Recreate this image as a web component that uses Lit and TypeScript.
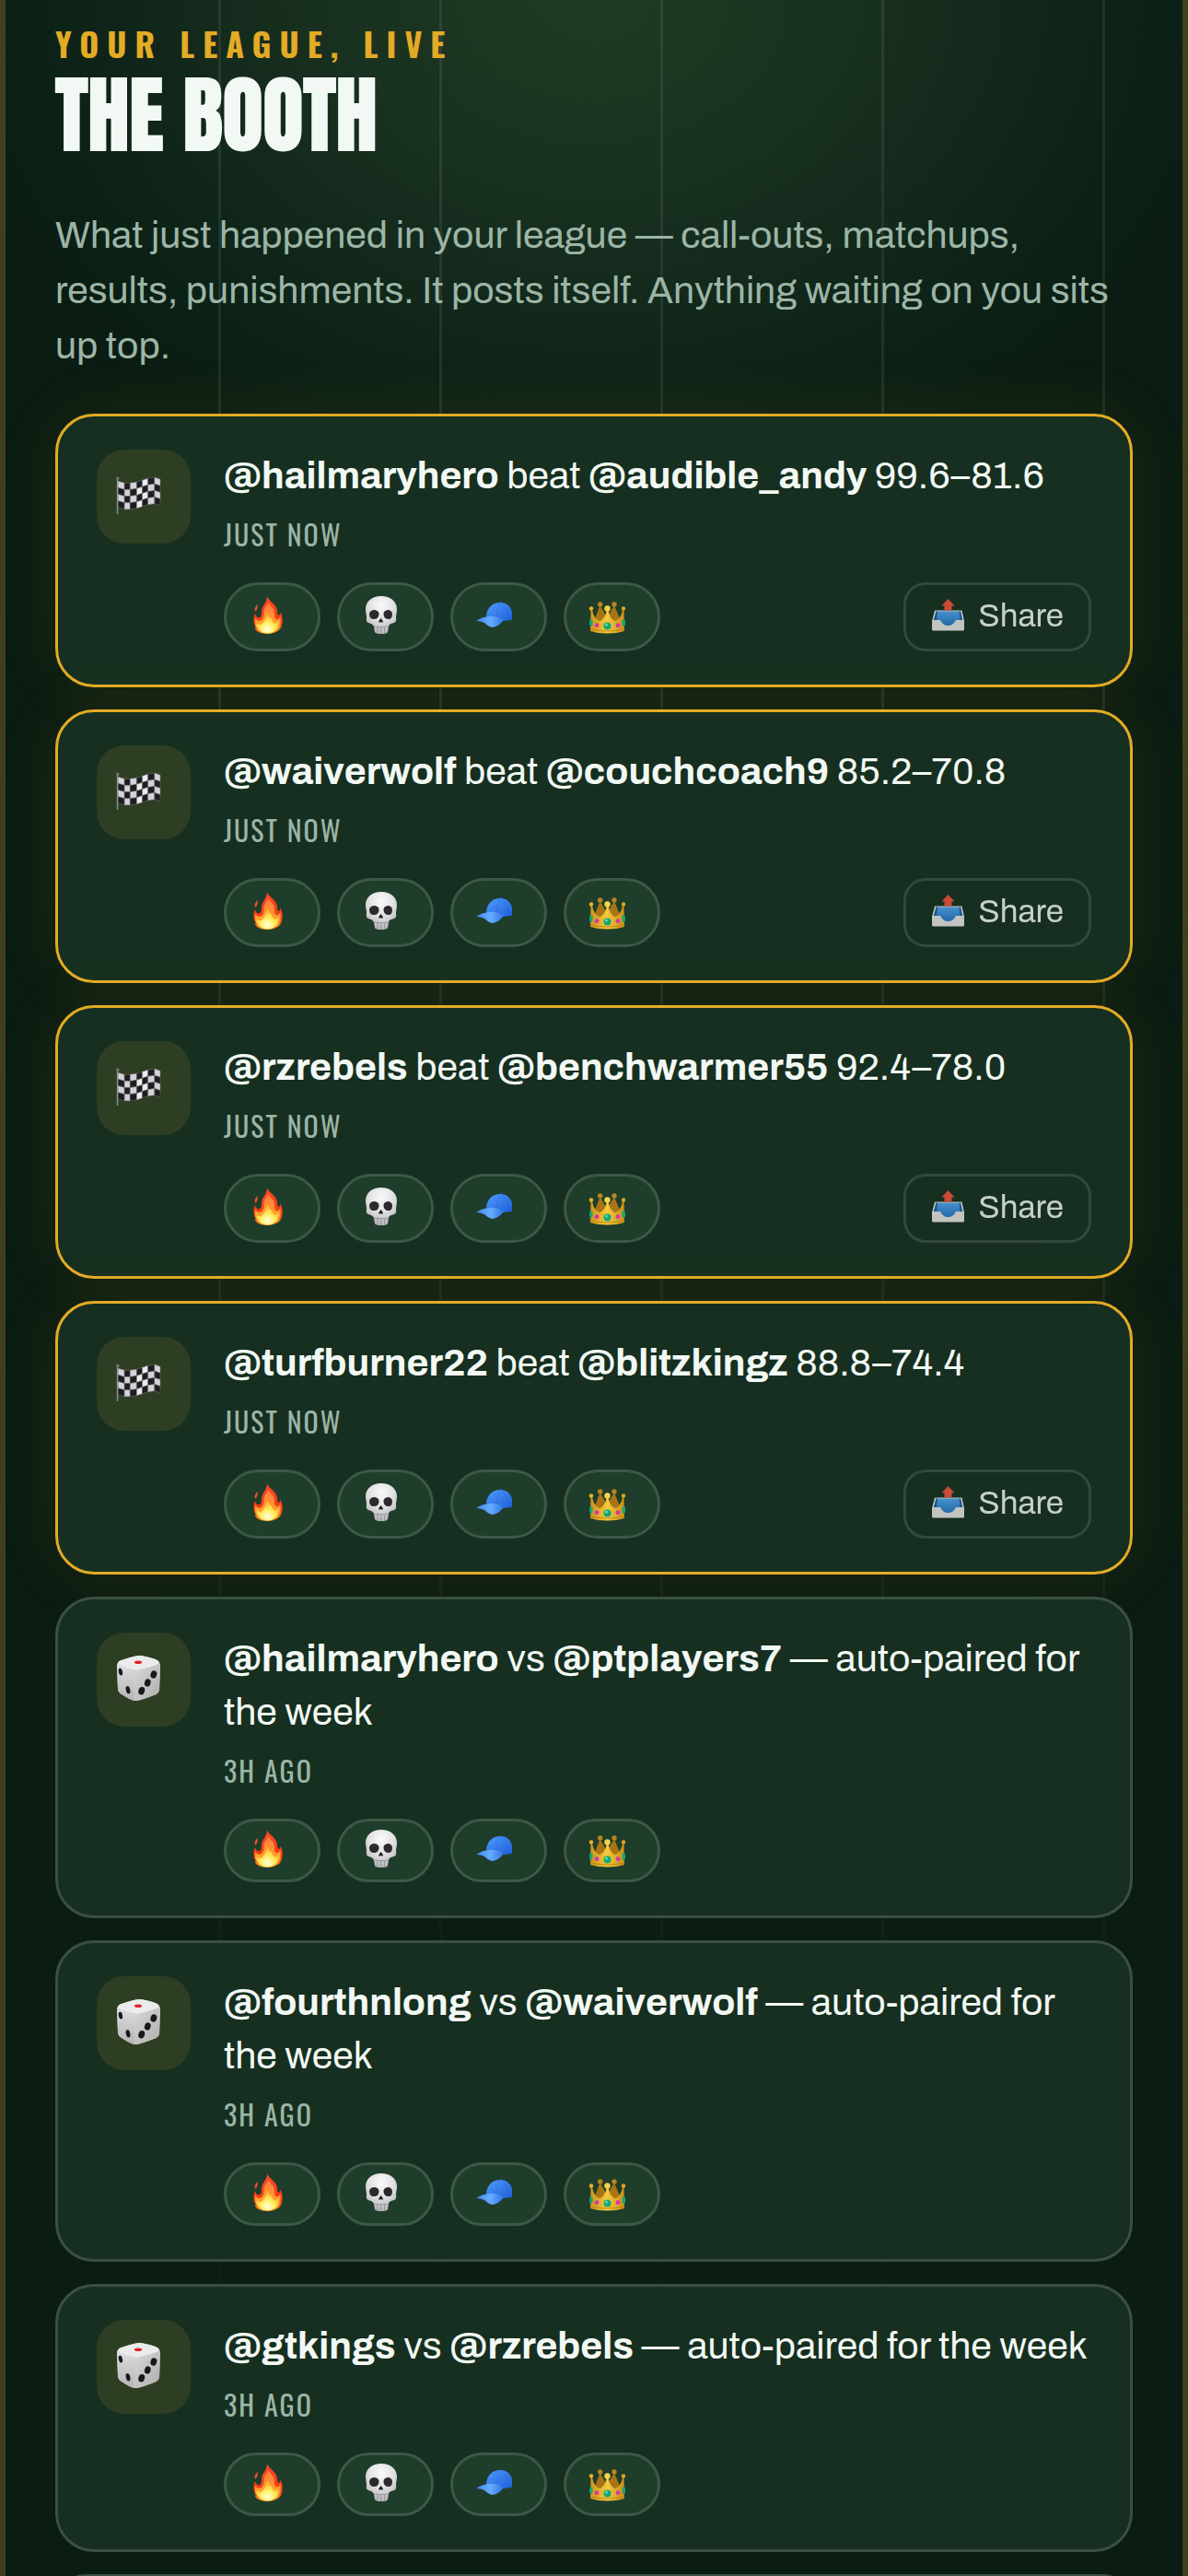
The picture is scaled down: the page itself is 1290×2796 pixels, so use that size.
import { LitElement, html, svg, css, nothing } from "lit";
import { customElement, property } from "lit/decorators.js";

type Part = string | { handle: string };
interface Post {
  kind: "result" | "pairing";
  text: Part[];
  time: string;
}

const at = (handle: string) => ({ handle: "@" + handle });
const result = (winner: string, loser: string, score: string): Post => ({
  kind: "result",
  text: [at(winner), " beat ", at(loser), " " + score],
  time: "Just now",
});
const pairing = (home: string, away: string): Post => ({
  kind: "pairing",
  text: [at(home), " vs ", at(away), " — auto-paired for the week"],
  time: "3h ago",
});

const POSTS: Post[] = [
  result("hailmaryhero", "audible_andy", "99.6–81.6"),
  result("waiverwolf", "couchcoach9", "85.2–70.8"),
  result("rzrebels", "benchwarmer55", "92.4–78.0"),
  result("turfburner22", "blitzkingz", "88.8–74.4"),
  pairing("hailmaryhero", "ptplayers7"),
  pairing("fourthnlong", "waiverwolf"),
  pairing("gtkings", "rzrebels"),
];

/* Checkered flag: seven columns by four rows, each column following the wave. */
const flagX = [2, 9, 15, 22, 28, 34, 41, 47];
const flagTop = [9, 11, 11, 10, 8, 6, 5, 7];
const flagCells = flagX.slice(0, -1).flatMap((x, c) =>
  [0, 1, 2, 3].map((r) => {
    const x2 = flagX[c + 1];
    const y = flagTop[c] + r * 7;
    const y2 = flagTop[c + 1] + r * 7;
    const light = c > 2 && c < 5 ? "#ececee" : "#d4d4d8";
    return svg`<path d=${`M${x} ${y}L${x2} ${y2}V${y2 + 7}L${x} ${y + 7}Z`}
      fill=${(c + r) % 2 ? "#1d1d1f" : light} stroke="#77777b" stroke-width=".5"/>`;
  })
);

const flagIcon = html`<svg class="tile-icon" viewBox="0 0 48 48" aria-hidden="true">
  ${flagCells}
  <path d="M1.500 6V44" stroke="#8d9499" stroke-width="1.400"/>
  <circle cx="1.800" cy="6" r="1.600" fill="#6f777c"/>
</svg>`;

const dieIcon = html`<svg class="tile-icon" viewBox="0 -1 50 50" aria-hidden="true">
  <defs>
    <linearGradient id="dl" x1="0" y1="0" x2="0" y2="1">
      <stop offset="0" stop-color="#dedede"/><stop offset="1" stop-color="#b4b4b4"/>
    </linearGradient>
    <linearGradient id="dr" x1="0" y1="0" x2="1" y2="1">
      <stop offset="0" stop-color="#d8d8d8"/><stop offset="1" stop-color="#aeaeae"/>
    </linearGradient>
  </defs>
  <path d="M6 4Q24 -2 28 -1Q44 2 47 5Q49 7 49 11L48 36Q48 40 44 42Q26 49 21 49Q17 49 5 41Q2 39 2 35L1 10Q1 6 6 4Z" fill="#d6d6d6"/>
  <path d="M1 8Q10 12 17 14Q21 16 21 21L20 49Q16 48 5 41Q2 39 2 35Z" fill="url(#dl)"/>
  <path d="M49 8Q40 11 27 14Q21 16 21 21L20 49Q26 49 44 42Q48 40 48 36Z" fill="url(#dr)"/>
  <path d="M2 8Q2 5 6 4Q22 -1 27 -1Q44 2 47 5Q49 7 45 9Q34 13 24 15Q19 15 5 10Z" fill="#ebebeb"/>
  <ellipse cx="24.500" cy="6.300" rx="4.200" ry="1.800" fill="#e3202a"/>
  <ellipse cx="5" cy="17" rx="2.100" ry="4" fill="#17181a" transform="rotate(-12 5 17)"/>
  <ellipse cx="13.300" cy="37" rx="2.300" ry="4.300" fill="#17181a" transform="rotate(-14 13.300 37)"/>
  <ellipse cx="41.700" cy="20" rx="3.400" ry="4.300" fill="#17181a" transform="rotate(18 41.700 20)"/>
  <ellipse cx="35" cy="29" rx="3.300" ry="4.300" fill="#17181a" transform="rotate(18 35 29)"/>
  <ellipse cx="28.300" cy="38" rx="3.400" ry="4.400" fill="#17181a" transform="rotate(18 28.300 38)"/>
</svg>`;

const fireIcon = html`<svg class="emoji" viewBox="0 0 42 42" aria-hidden="true">
  <defs>
    <linearGradient id="fo" x1="0" y1="0" x2="0" y2="1">
      <stop offset="0" stop-color="#f9482c"/><stop offset=".7" stop-color="#f63a12"/><stop offset="1" stop-color="#fb9a1c"/>
    </linearGradient>
    <linearGradient id="fm" x1="0" y1="0" x2="0" y2="1">
      <stop offset="0" stop-color="#fb7a3e"/><stop offset=".6" stop-color="#ff9c2e"/><stop offset="1" stop-color="#ffc02e"/>
    </linearGradient>
    <radialGradient id="fi" cx=".5" cy=".8" r=".7">
      <stop offset="0" stop-color="#fffde0"/><stop offset=".45" stop-color="#ffef62"/><stop offset="1" stop-color="#ffb62c"/>
    </radialGradient>
  </defs>
  <path d="M20 1C21 6 30 9 31 17Q31 21 32 22Q34 22 34.500 18.500C37 23 37.500 28 36 33Q35 36 33 38Q27 42 21 42Q12 42 8 38L6.500 35.500L8 35.500C5 31 4.500 25 7 20Q8 24 11 24.500Q14 24 14 18C14 11 20 9 20 1Z" fill="url(#fo)"/>
  <path d="M10 10Q7 12 6.500 15L7.500 18Q9 16 9.500 14Z" fill="#f4512f"/>
  <path d="M21 8Q24 12 27 15Q28 18 28 23Q29 27 32 26Q34 25 34.500 23Q36 32 31 38Q26 41 21 41Q14 41 10 37Q6 32 7 25Q9 28 12 28Q17 26 16.500 19Q17 13 20 11Z" fill="url(#fm)"/>
  <path d="M20 19Q22 24 25 26Q26 30 29 31Q31 30 32 28Q33 35 28 39Q24 41.500 20 41.500Q14 41 11 37Q8 34 9 30Q11 33 14 32Q19 27 20 19Z" fill="url(#fi)"/>
</svg>`;

const skullIcon = html`<svg class="emoji" viewBox="0 0 42 42" aria-hidden="true">
  <defs>
    <radialGradient id="sk" cx=".5" cy=".25" r=".75">
      <stop offset="0" stop-color="#fafafa"/><stop offset=".55" stop-color="#dfdfe1"/><stop offset="1" stop-color="#b4b4b9"/>
    </radialGradient>
  </defs>
  <path d="M21 1C31 1 38 7 38 15C38 19 37 21 37 24Q38 29 35 30Q29 31 29 34L28 40Q27 42 21 42Q15 42 14 40L13 34Q12 31 7 30Q4 29 5 24C5 21 4 19 4 15C4 7 11 1 21 1Z" fill="url(#sk)"/>
  <path d="M8 20Q9 16 14 16Q19 17 18.500 21Q18 26 13 26Q8 26 8 20Z" fill="#2a2a2d"/>
  <path d="M33 20Q32 16 28 16Q23 17 23.500 21Q24 26 29 26Q33 26 33 20Z" fill="#2a2a2d"/>
  <path d="M20.500 25Q22.500 27 23 29Q22 30 20.500 29Q19 30 18 29Q19 27 20.500 25Z" fill="#1b1b1d"/>
  <path d="M13.500 34Q21 35.500 28.500 34M17 35V41M20.800 35V42M24.600 35V41" fill="none" stroke="#8f8f94" stroke-width=".9"/>
</svg>`;

const capIcon = html`<svg class="emoji" viewBox="0 0 42 42" aria-hidden="true">
  <defs>
    <linearGradient id="cc" x1="0" y1="0" x2="1" y2="1">
      <stop offset="0" stop-color="#4e9cff"/><stop offset="1" stop-color="#1f5fd8"/>
    </linearGradient>
    <linearGradient id="cb" x1="0" y1="0" x2="1" y2="0">
      <stop offset="0" stop-color="#3d87f2"/><stop offset=".5" stop-color="#67adff"/><stop offset="1" stop-color="#2f74e4"/>
    </linearGradient>
  </defs>
  <path d="M12 24Q12 15 19 10Q23 8 27 8Q28 7 29 8Q36 9 39 15Q41 20 39.500 27L30 28Q20 22 12 24Z" fill="url(#cc)"/>
  <path d="M28 8Q23 13 23.500 23M28 8Q36 13 36 27" fill="none" stroke="#2561cc" stroke-width=".7" opacity=".5"/>
  <path d="M1.500 28Q4 25 12 23.500Q22 21 31 27Q26 34 18 35Q14 34 10 30Q6 28 1.500 28Z" fill="url(#cb)"/>
</svg>`;

const crownIcon = html`<svg class="emoji" viewBox="0 0 42 42" aria-hidden="true">
  <defs>
    <linearGradient id="cr" x1="0" y1="0" x2="1" y2="0">
      <stop offset="0" stop-color="#cc9419"/><stop offset=".5" stop-color="#f3ca3f"/><stop offset="1" stop-color="#c68d17"/>
    </linearGradient>
  </defs>
  <path d="M6 28L12.500 11L20 24L28 11L35 28Z" fill="#a87414"/>
  <circle cx="12.700" cy="10" r="2.700" fill="#b8841e"/><circle cx="28" cy="10" r="2.700" fill="#b8841e"/>
  <path d="M2 39L2.500 16L4 16Q6 26 12 28Q18 26 20 16L21.500 16Q23 26 29 28Q35 26 37 16L38.500 16L39 39Q31 41.500 20.500 41.500Q10 41.500 2 39Z" fill="url(#cr)"/>
  <path d="M2 37Q20 41 39 37" fill="none" stroke="#b17c12" stroke-width=".8"/>
  <circle cx="3" cy="14.500" r="2.200" fill="#e9b52e"/><circle cx="20.500" cy="14.500" r="3.200" fill="#f8d347"/><circle cx="38" cy="14.500" r="2.200" fill="#dba526"/>
  <circle cx="20.500" cy="33.500" r="4" fill="#17a673"/><circle cx="19.500" cy="32" r="1.500" fill="#5fdcae"/>
  <circle cx="9" cy="32.700" r="2.400" fill="#d637a8"/><circle cx="32" cy="32.700" r="2.400" fill="#d637a8"/>
  <ellipse cx="2.800" cy="30" rx="1.800" ry="4" fill="#17a673"/><ellipse cx="38.300" cy="30" rx="1.800" ry="4" fill="#17a673"/>
</svg>`;

const outboxIcon = html`<svg class="emoji" viewBox="0 0 42 42" aria-hidden="true">
  <defs>
    <linearGradient id="ob" x1="0" y1="0" x2="0" y2="1">
      <stop offset="0" stop-color="#55a9f5"/><stop offset="1" stop-color="#2479cf"/>
    </linearGradient>
  </defs>
  <path d="M4 15.500H33.500L36 27V36Q36 37.500 34.500 37.500H2.500Q1 37.500 1 36V27Z" fill="#eceae8"/>
  <path d="M5.500 16.500H32L34 26H27Q24 32 18.500 32Q13 32 10 26H3Z" fill="url(#ob)"/>
  <path d="M5.500 16.500H7L6 26H3ZM32 16.500H30.500L31.500 26H34Z" fill="#1c5fa8"/>
  <path d="M18.500 3L25.500 10.500H22.500V15.500H14.500V10.500H11.500Z" fill="#f8523f"/>
</svg>`;

const REACTIONS = [
  { name: "Fire", icon: fireIcon },
  { name: "Skull", icon: skullIcon },
  { name: "Cap", icon: capIcon },
  { name: "Crown", icon: crownIcon },
];

@customElement("booth-post")
export class BoothPost extends LitElement {
  @property({ attribute: false }) post!: Post;

  static styles = css`
    :host {
      display: block;
    }
    .card {
      display: flex;
      align-items: flex-start;
      gap: 36px;
      padding: 36px 42px;
      border: 3px solid #3a5042;
      border-radius: 42px;
      background: #162f20;
    }
    .result {
      border-color: #e3ab26;
      box-shadow: 0 0 72px rgba(227, 171, 38, 0.09);
    }
    .tile {
      flex: none;
      display: flex;
      align-items: center;
      box-sizing: border-box;
      width: 102px;
      height: 102px;
      padding: 0 0 3px 21px;
      border-radius: 30px;
      background: #2d3e22;
    }
    .tile-icon {
      width: 49px;
      height: 49px;
    }
    .body {
      flex: 1;
      min-width: 0;
    }
    .text {
      margin: 0;
      font-size: 41px;
      line-height: 58px;
      color: #f2f8f3;
    }
    .handle {
      font-weight: 700;
    }
    .time {
      display: block;
      margin-top: 11px;
      font: 400 30px/46px Oswald, "Roboto Condensed", sans-serif;
      letter-spacing: 2px;
      text-transform: uppercase;
      color: #9cb5a6;
    }
    .actions {
      display: flex;
      gap: 18px;
      margin-top: 29px;
    }
    button {
      display: flex;
      align-items: center;
      margin: 0;
      border: 3px solid #3e5848;
      font: inherit;
      cursor: pointer;
    }
    .chip {
      min-height: 69px;
      padding: 0 33px 6px 24px;
      border-radius: 999px;
      background: #1e3d2a;
    }
    .share {
      min-height: 75px;
      gap: 9px;
      margin-left: auto;
      padding: 0 27px 3px;
      border-radius: 24px;
      border-color: #3a5042;
      background: none;
      color: #f2f8f3;
      font-size: 35px;
      line-height: 48px;
      opacity: 0.8;
    }
    .emoji {
      display: block;
      width: 42px;
      height: 42px;
    }
  `;

  render() {
    const { kind, text, time } = this.post;
    return html`<article class="card ${kind}">
      <div class="tile">${kind === "result" ? flagIcon : dieIcon}</div>
      <div class="body">
        <p class="text">${text.map((p) => (typeof p === "string" ? p : html`<b class="handle">${p.handle}</b>`))}</p>
        <time class="time">${time}</time>
        <div class="actions">
          ${REACTIONS.map((r) => html`<button class="chip" type="button" aria-label=${r.name}>${r.icon}</button>`)}
          ${kind === "result" ? html`<button class="share" type="button">${outboxIcon}<span>Share</span></button>` : nothing}
        </div>
      </div>
    </article>`;
  }
}

@customElement("app-root")
export class AppRoot extends LitElement {
  static styles = css`
    :host {
      display: block;
      height: 100vh;
      overflow: hidden;
      font-family: Archivo, "Liberation Sans", sans-serif;
    }
    .page {
      position: relative;
      box-sizing: border-box;
      min-height: 100vh;
      padding: 20px 60px 24px;
      background:
        radial-gradient(ellipse 480px 300px at 50% 0, rgba(120, 140, 20, 0.04), transparent),
        radial-gradient(ellipse 56% 560px at 50% 0, #1c3823, #172f20 40%, #0c2116 85%, transparent),
        #0b1c12;
    }
    /* Yard lines and sidelines of the field behind the feed */
    .field {
      position: absolute;
      inset: 0;
      background: repeating-linear-gradient(90deg, transparent 0 237px, rgba(255, 255, 255, 0.08) 237px 240px);
      mask-image: linear-gradient(#000 25%, transparent 95%);
    }
    .sidelines {
      position: absolute;
      inset: 0;
      border: solid #40401f;
      border-width: 0 6px;
    }
    main {
      position: relative;
    }
    .kicker {
      margin: 0;
      font: 700 36px/54px Oswald, "Roboto Condensed", sans-serif;
      letter-spacing: 9px;
      text-transform: uppercase;
      color: #e3ab26;
    }
    h1 {
      margin: 6px 0 0;
      font: 400 90px/90px Anton, Oswald, sans-serif;
      -webkit-text-stroke: 2px #f2f8f3;
      text-transform: uppercase;
      color: #f2f8f3;
    }
    .intro {
      margin: 56px 0 0;
      font-size: 41px;
      line-height: 60px;
      color: #9cb5a6;
    }
    .feed {
      display: grid;
      gap: 24px;
      margin-top: 43px;
    }
    .more {
      min-height: 60px;
      border: 3px solid #3a5042;
      border-radius: 42px;
      background: #162f20;
    }
  `;

  render() {
    return html`<div class="page">
      <div class="field"></div>
      <div class="sidelines"></div>
      <main>
        <p class="kicker">Your league, live</p>
        <h1>The Booth</h1>
        <p class="intro">
          What just happened in your league — call-outs, matchups, results, punishments. It posts itself.
          Anything waiting on you sits up top.
        </p>
        <section class="feed">
          ${POSTS.map((p) => html`<booth-post .post=${p}></booth-post>`)}
          <div class="more"></div>
        </section>
      </main>
    </div>`;
  }
}
